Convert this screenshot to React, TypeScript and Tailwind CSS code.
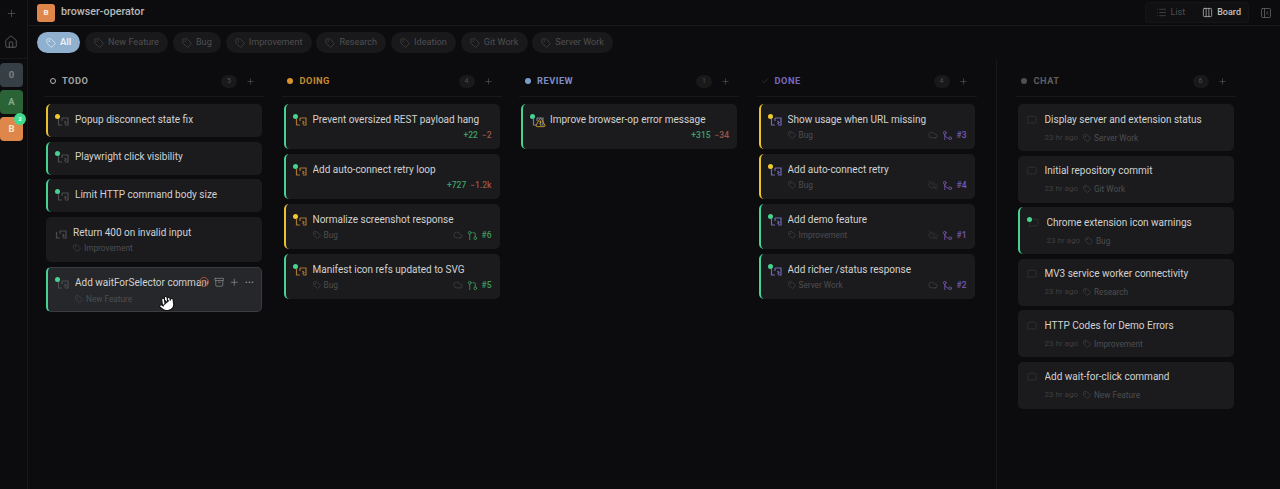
import {
  Archive,
  Check,
  Cloud,
  CloudOff,
  Columns3,
  Ellipsis,
  GitMerge,
  GitPullRequest,
  Hand,
  House,
  List,
  MessageSquare,
  PanelLeftClose,
  Plus,
  Tag,
  TriangleAlert,
} from "lucide-react";
import type { ReactNode } from "react";

type CardData = {
  title: string;
  accent?: "green" | "yellow";
  tag?: string;
  diff?: [string, string];
  cloud?: "on" | "off";
  pr?: string;
  warn?: boolean;
  time?: string;
  hover?: boolean;
};

type ColumnData = {
  name: string;
  count: number;
  marker: ReactNode;
  nameClass: string;
  iconClass: string;
  prClass: string;
  merged?: boolean;
  chat?: boolean;
  gapClass: string;
  cards: CardData[];
};

const FILTERS = ["New Feature", "Bug", "Improvement", "Research", "Ideation", "Git Work", "Server Work"];

const COLUMNS: ColumnData[] = [
  {
    name: "TODO",
    count: 5,
    marker: <span className="h-[6px] w-[6px] rounded-full border-[1.5px] border-[#b5b5b5]" />,
    nameClass: "text-[#a3a3a3]",
    iconClass: "text-[#4d4d4f]",
    prClass: "text-[#3f9b5f]",
    gapClass: "gap-[4.7px]",
    cards: [
      { title: "Popup disconnect state fix", accent: "yellow" },
      { title: "Playwright click visibility", accent: "green" },
      { title: "Limit HTTP command body size", accent: "green" },
      { title: "Return 400 on invalid input", tag: "Improvement" },
      { title: "Add waitForSelector command", accent: "green", tag: "New Feature", hover: true },
    ],
  },
  {
    name: "DOING",
    count: 4,
    marker: <span className="h-[6px] w-[6px] rounded-full bg-[#d9952b]" />,
    nameClass: "text-[#c98a2e]",
    iconClass: "text-[#a8742f]",
    prClass: "text-[#3f9b5f]",
    gapClass: "gap-[5px]",
    cards: [
      { title: "Prevent oversized REST payload hang", accent: "green", diff: ["+22", "−2"] },
      { title: "Add auto-connect retry loop", accent: "green", diff: ["+727", "−1.2k"] },
      { title: "Normalize screenshot response", accent: "yellow", tag: "Bug", cloud: "on", pr: "#6" },
      { title: "Manifest icon refs updated to SVG", accent: "green", tag: "Bug", cloud: "on", pr: "#5" },
    ],
  },
  {
    name: "REVIEW",
    count: 1,
    marker: <span className="h-[6px] w-[6px] rounded-full bg-[#7b9cc9]" />,
    nameClass: "text-[#7f8cc4]",
    iconClass: "text-[#6d7aa8]",
    prClass: "text-[#3f9b5f]",
    gapClass: "gap-[5px]",
    cards: [{ title: "Improve browser-op error message", accent: "green", diff: ["+315", "−34"], warn: true }],
  },
  {
    name: "DONE",
    count: 4,
    marker: <Check className="h-[8px] w-[8px] text-[#3d3d3f]" strokeWidth={2} />,
    nameClass: "text-[#7a68bd]",
    iconClass: "text-[#7268b4]",
    prClass: "text-[#7459b0]",
    merged: true,
    gapClass: "gap-[5px]",
    cards: [
      { title: "Show usage when URL missing", accent: "yellow", tag: "Bug", cloud: "on", pr: "#3" },
      { title: "Add auto-connect retry", accent: "yellow", tag: "Bug", cloud: "off", pr: "#4" },
      { title: "Add demo feature", accent: "green", tag: "Improvement", cloud: "off", pr: "#1" },
      { title: "Add richer /status response", accent: "green", tag: "Server Work", cloud: "on", pr: "#2" },
    ],
  },
  {
    name: "CHAT",
    count: 6,
    marker: <span className="h-[6px] w-[6px] rounded-full bg-[#4f4f51]" />,
    nameClass: "text-[#5e5e60]",
    iconClass: "text-[#3a3a3c]",
    prClass: "text-[#3f9b5f]",
    chat: true,
    gapClass: "gap-[4.5px]",
    cards: [
      { title: "Display server and extension status", tag: "Server Work", time: "23 hr ago" },
      { title: "Initial repository commit", tag: "Git Work", time: "23 hr ago" },
      { title: "Chrome extension icon warnings", accent: "green", tag: "Bug", time: "23 hr ago" },
      { title: "MV3 service worker connectivity", tag: "Research", time: "23 hr ago" },
      { title: "HTTP Codes for Demo Errors", tag: "Improvement", time: "23 hr ago" },
      { title: "Add wait-for-click command", tag: "New Feature", time: "23 hr ago" },
    ],
  },
];

// the little branch + box glyph in front of task titles
function TaskGlyph({ className }: { className: string }) {
  return (
    <svg viewBox="0 0 12 12" fill="none" stroke="currentColor" strokeWidth="1.2" className={`h-[12px] w-[12px] ${className}`}>
      <path d="M1.5 5v6h3.5" />
      <path d="M5 4h6v7H8" />
      <path d="M5 4v3" />
      <path d="M7.5 7l1.5 1.5-1.5 1.5" />
    </svg>
  );
}

function TagLabel({ label }: { label: string }) {
  return (
    <span className="flex items-center gap-[3px] text-[8.25px] text-[#4e4e50]">
      <Tag className="h-[8px] w-[8px]" strokeWidth={1.8} />
      {label}
    </span>
  );
}

function Card({ card, column }: { card: CardData; column: ColumnData }) {
  const tall = card.tag || card.diff;
  const height = column.chat ? "h-[47px]" : tall ? "h-[45px]" : "h-[33px]";
  const accent =
    card.accent === "green"
      ? "border-l-2 border-l-[#46d391] pl-[9px]"
      : card.accent === "yellow"
        ? "border-l-2 border-l-[#e8c22e] pl-[9px]"
        : "pl-[9px]";
  const bg = card.hover ? "bg-[#25272a] border-y border-r border-[#3a3c3f]" : "bg-[#1b1b1d]";

  return (
    <div className={`relative flex shrink-0 gap-[6px] overflow-hidden rounded-[5px] pr-[8px] pt-[9.5px] ${height} ${accent} ${bg}`}>
      <div className="relative h-[12px] w-[12px] shrink-0">
        {column.chat ? (
          <MessageSquare className="mt-[1px] h-[10px] w-[10px] text-[#39393b]" strokeWidth={1.5} />
        ) : (
          <TaskGlyph className={column.iconClass} />
        )}
        {card.accent && (
          <span
            className={`absolute left-[-2px] top-0 h-[5px] w-[5px] rounded-full ${
              card.accent === "green" ? "bg-[#46d391]" : "bg-[#efc92e]"
            }`}
          />
        )}
        {card.warn && <TriangleAlert className="absolute left-[3px] top-[3px] h-[11px] w-[11px] text-[#dba928]" strokeWidth={1.8} />}
      </div>
      <div className="min-w-0 flex-1">
        <div className={`text-[10px] leading-[12px] text-[#d2d2d2] ${card.hover ? "pr-[45px]" : ""}`}>
          <div className="overflow-hidden whitespace-nowrap">{card.title}</div>
        </div>
        {card.time ? (
          <div className="mt-[6px] flex items-center gap-[5px]">
            <span className="text-[8px] text-[#3f3f41]">{card.time}</span>
            {card.tag && <TagLabel label={card.tag} />}
          </div>
        ) : card.diff ? (
          <div className="mt-[3.5px] flex justify-end gap-[4px] text-[8.5px] font-medium leading-[12px]">
            <span className="text-[#3ba06b]">{card.diff[0]}</span>
            <span className="text-[#9c5748]">{card.diff[1]}</span>
          </div>
        ) : card.tag ? (
          <div className="mt-[3.5px] flex h-[12px] items-center justify-between">
            <TagLabel label={card.tag} />
            {card.pr && (
              <span className={`flex items-center gap-[4px] text-[8.5px] font-medium ${column.prClass}`}>
                {card.cloud === "off" ? (
                  <CloudOff className="h-[10px] w-[10px] text-[#3f3f41]" strokeWidth={1.5} />
                ) : (
                  <Cloud className="h-[10px] w-[10px] text-[#4a4a4c]" strokeWidth={1.5} />
                )}
                {column.merged ? (
                  <GitMerge className="h-[11px] w-[11px]" strokeWidth={1.8} />
                ) : (
                  <GitPullRequest className="h-[11px] w-[11px]" strokeWidth={1.8} />
                )}
                {card.pr}
              </span>
            )}
          </div>
        ) : null}
      </div>
      {card.hover && (
        <>
          <div className="absolute right-[7px] top-[9px] flex items-center gap-[4.5px] text-[#8f9092]">
            <span className="flex h-[10.5px] w-[10.5px] items-center justify-center rounded-full border border-[#a5503a] text-[6px] leading-none text-[#a5503a]">P</span>
            <Archive className="h-[10.5px] w-[10.5px]" strokeWidth={1.6} />
            <Plus className="h-[10.5px] w-[10.5px]" strokeWidth={1.6} />
            <Ellipsis className="h-[10.5px] w-[10.5px]" strokeWidth={1.8} />
          </div>
          <Hand className="absolute left-[110px] top-[27px] h-[17px] w-[17px] rotate-[-8deg] fill-white text-[#111]" strokeWidth={1.6} />
        </>
      )}
    </div>
  );
}

function Column({ column }: { column: ColumnData }) {
  return (
    <section className="flex w-[216px] shrink-0 flex-col pt-[14px]">
      <div className="-mx-[2px] flex h-[24px] items-center border-b border-[#18181a] pb-[7px] pl-[4px] pr-[9px]">
        <span className="flex w-[9px] items-center justify-center">{column.marker}</span>
        <span className={`ml-[5px] text-[9.25px] font-bold tracking-[0.5px] ${column.nameClass}`}>{column.name}</span>
        <span className="ml-auto flex h-[13px] w-[16px] items-center justify-center rounded-full bg-[#19191b] text-[7px] text-[#4d4d4f]">{column.count}</span>
        <Plus className="ml-[9px] h-[9px] w-[9px] text-[#5d5d5f]" strokeWidth={1.6} />
      </div>
      <div className={`mt-[7px] flex flex-col ${column.gapClass}`}>
        {column.cards.map((card) => (
          <Card key={card.title} card={card} column={column} />
        ))}
      </div>
    </section>
  );
}

export default function App() {
  const chat = COLUMNS[4];
  return (
    <div className="flex h-[489px] w-[1280px] overflow-hidden bg-[#0c0c0e]" style={{ fontFamily: "Roboto, sans-serif" }}>
      {/* Project rail */}
      <aside className="flex w-[28px] shrink-0 flex-col border-r border-[#18181a]">
        <div className="flex h-[26px] items-center justify-center pr-[5px]">
          <Plus className="h-[11px] w-[11px] text-[#58585a]" strokeWidth={1.6} />
        </div>
        <div className="flex h-[33px] items-center justify-center border-b border-[#18181a] pr-[5px]">
          <House className="h-[14px] w-[14px] text-[#68686a]" strokeWidth={1.4} />
        </div>
        <div className="mt-[4px] flex flex-col gap-[3px]">
          <div className="flex h-[24px] w-[23px] items-center justify-center rounded-[4px] bg-[#373f46] text-[9.5px] font-bold text-[#7c8287]">0</div>
          <div className="flex h-[24px] w-[23px] items-center justify-center rounded-[4px] bg-[#2a6335] text-[9.5px] font-bold text-[#86a98c]">A</div>
          <div className="relative flex h-[24px] w-[23px] items-center justify-center rounded-[4px] bg-[#df864a] text-[9.5px] font-bold text-[#f8e6d8]">
            B
            <span className="absolute left-[14px] top-[-4px] flex h-[12px] w-[12px] items-center justify-center rounded-full bg-[#3fdc8e] text-[6px] font-bold leading-none text-white">
              2
            </span>
          </div>
        </div>
      </aside>

      <main className="flex min-w-0 flex-1 flex-col">
        {/* Top bar */}
        <header className="flex h-[26px] shrink-0 items-center border-b border-[#18181a] pl-[9px] pr-[8px]">
          <span className="flex h-[18px] w-[18px] items-center justify-center rounded-[3px] bg-[#df864a] text-[8px] font-bold text-[#fbeee3]">B</span>
          <span className="ml-[6px] text-[10.75px] font-medium text-[#b9b9b9]">browser-operator</span>
          <div className="ml-auto flex items-center gap-[11px]">
            <div className="flex h-[21px] items-center gap-[4px] rounded-[4px] border border-[#161618] bg-[#101012] pl-[10px] pr-[7px]">
              <List className="h-[11px] w-[11px] text-[#4f4f51]" strokeWidth={1.5} />
              <span className="mr-[13px] text-[9px] text-[#4f4f51]">List</span>
              <Columns3 className="h-[11px] w-[11px] text-[#c4c4c4]" strokeWidth={1.5} />
              <span className="text-[9px] font-medium text-[#c4c4c4]">Board</span>
            </div>
            <PanelLeftClose className="h-[12px] w-[12px] text-[#6a6a6c]" strokeWidth={1.5} />
          </div>
        </header>

        {/* Label filters */}
        <div className="flex h-[33px] shrink-0 items-center gap-[4.5px] pl-[9px]">
          <span className="flex h-[21px] items-center gap-[4px] rounded-full bg-[#8fb0cf] px-[9px] text-[9.5px] font-semibold text-[#eef3f8]">
            <Tag className="h-[10px] w-[10px]" strokeWidth={1.6} />
            All
          </span>
          {FILTERS.map((name) => (
            <span key={name} className="flex h-[21px] items-center gap-[4px] rounded-full bg-[#19191b] px-[9.25px] text-[9.1px] text-[#4f4f51]">
              <Tag className="h-[10px] w-[10px]" strokeWidth={1.5} />
              {name}
            </span>
          ))}
        </div>

        {/* Board */}
        <div className="flex flex-1 pl-[18px]">
          <div className="flex gap-[21.5px]">
            {COLUMNS.slice(0, 4).map((column) => (
              <Column key={column.name} column={column} />
            ))}
          </div>
          <div className="ml-[21.5px] border-l border-[#18181a] pl-[20.5px]">
            <Column column={chat} />
          </div>
        </div>
      </main>
    </div>
  );
}
